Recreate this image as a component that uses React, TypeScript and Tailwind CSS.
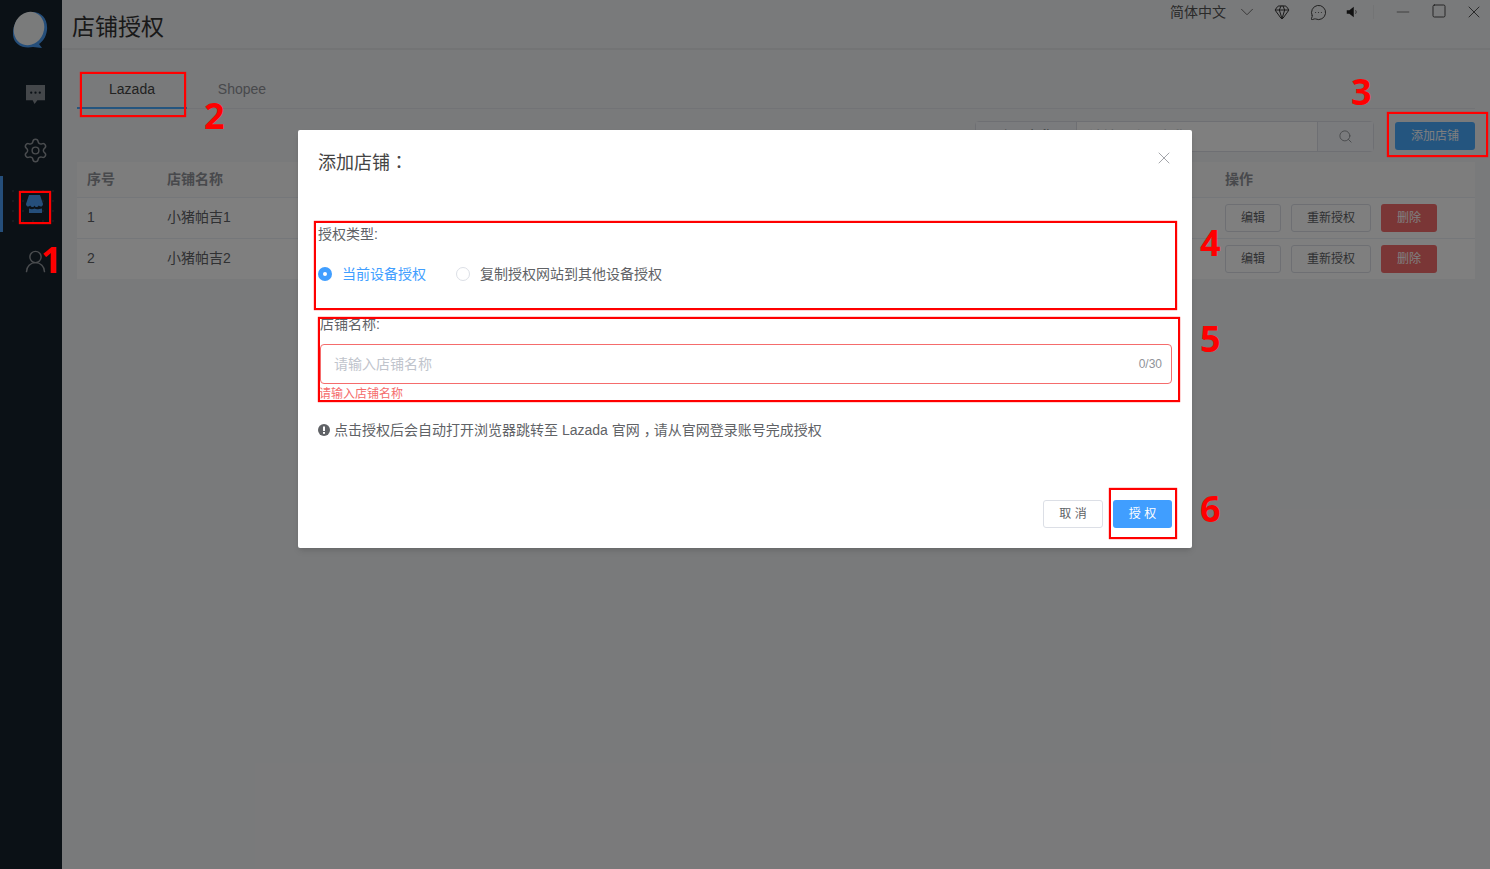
import { ChevronDown, Gem, MessageCircleMore, Minus, Search, Settings, Square, UserRound, X } from "lucide-react";

const font = { fontFamily: '"Liberation Sans", "Noto Sans CJK SC", sans-serif' };
const centredPunct = { fontFamily: '"Noto Sans CJK TC", sans-serif' };

const rows = [
  { id: 1, name: "小猪帕吉1" },
  { id: 2, name: "小猪帕吉2" },
];

const marks = [
  { n: "1", box: "left-[19px] top-[191px] w-[32px] h-[33px]", num: "left-[41px] top-[235px]" },
  { n: "2", box: "left-[80px] top-[72px] w-[106px] h-[45px]", num: "left-[204px] top-[91px]" },
  { n: "3", box: "left-[1387px] top-[112px] w-[101px] h-[45px]", num: "left-[1351px] top-[67px]" },
  { n: "4", box: "left-[314px] top-[221px] w-[863px] h-[89px]", num: "left-[1200px] top-[218px]" },
  { n: "5", box: "left-[318px] top-[317px] w-[862px] h-[85px]", num: "left-[1200px] top-[314px]" },
  { n: "6", box: "left-[1109px] top-[488px] w-[68px] h-[51px]", num: "left-[1200px] top-[484px]" },
];

const Sidebar = () => (
  <aside className="flex w-[62px] shrink-0 flex-col items-center bg-[#16222c]">
    <svg className="mt-[11px] h-[38px] w-[36px]" viewBox="0 0 36 38">
      <path d="M19 1C29 1 35 8 34 19C33 27 29 31 26 33L29 37L20 36C10 38 1 34 0 24C-1 12 8 1 19 1Z" fill="#4a9df5" />
      <ellipse cx="16" cy="17.500" rx="15" ry="17" transform="rotate(22 16 17.500)" fill="#f4f6f7" />
    </svg>
    <div className="mt-[34px] flex h-[24px] w-full items-center justify-center pl-[9px]">
      <svg className="h-[20px] w-[19px]" viewBox="0 0 20 21">
        <path d="M0 0H20V16H12L9 20L7 16H0Z" fill="#888e94" />
        <circle cx="5.500" cy="8" r="1.200" fill="#16222c" />
        <circle cx="10" cy="8" r="1.200" fill="#16222c" />
        <circle cx="14.500" cy="8" r="1.200" fill="#16222c" />
      </svg>
    </div>
    <div className="mt-[30px] flex w-full justify-center pl-[9px]">
      <Settings className="h-[27px] w-[27px] text-[#94999e]" strokeWidth={1.3} />
    </div>
    <div className="relative mt-[12px] flex h-[56px] w-full items-center justify-center">
      <div className="absolute left-0 top-0 h-full w-[3px] bg-[#4a9df5]" />
      <div className="absolute left-[8px] top-[10px] h-[36px] w-[49px] bg-[radial-gradient(#2a3640_1px,transparent_1px)] bg-[size:10px_10px]" />
      <svg className="relative ml-[7px] h-[18px] w-[17px]" viewBox="0 0 17 18">
        <path d="M3 0H14L17 9C17 11.500 14.500 12.500 12.750 10.500C11.500 12.500 9.500 12.500 8.500 10.500C7.500 12.500 5.500 12.500 4.250 10.500C2.500 12.500 0 11.500 0 9Z" fill="#4a9df5" />
        <path d="M3 13.500C5 14.500 7 14.500 8.500 13.500C10 14.500 12 14.500 16 13.500V18H3Z" fill="#4a9df5" />
      </svg>
    </div>
    <div className="mt-[16px] flex w-full justify-center pl-[9px]">
      <UserRound className="h-[27px] w-[27px] text-[#94999e]" strokeWidth={1.3} />
    </div>
  </aside>
);

const Header = () => (
  <header className="flex h-[50px] shrink-0 items-start justify-between border-b-2 border-[#e6e8ea] pl-[10px]">
    <h1 className="mt-[9px] text-[23px] leading-[36px] font-normal text-[#333]">店铺授权</h1>
    <div className="flex h-[24px] items-center text-[#333]">
      <span className="text-[14px] leading-[24px] text-[#555]">简体中文</span>
      <ChevronDown className="ml-[10px] h-[22px] w-[22px] text-[#666]" strokeWidth={1} />
      <Gem className="ml-[16px] h-[16px] w-[16px]" strokeWidth={1.5} />
      <MessageCircleMore className="ml-[20px] h-[17px] w-[17px]" strokeWidth={1.3} />
      <svg className="ml-[18px] h-[14px] w-[14px]" viewBox="-1 -1 16 16">
        <path d="M1 5H4L9 1V13L4 9H1Z" fill="#222" />
        <path d="M11 5C12 6 12 8 11 9" fill="none" stroke="#555" />
      </svg>
      <span className="ml-[14px] h-[14px] w-px bg-[#e6e8ea]" />
      <Minus className="ml-[19px] h-[20px] w-[20px] text-[#777]" strokeWidth={1.1} />
      <Square className="ml-[18px] -mt-[2px] h-[16px] w-[16px] text-[#333]" strokeWidth={1.3} />
      <X className="ml-[17px] mr-[6px] h-[20px] w-[20px] text-[#333]" strokeWidth={1} />
    </div>
  </header>
);

const DataTable = () => (
  <div className="mt-[10px] bg-white text-[14px] text-[#606266]">
    <div className="flex h-[36px] items-center border-b border-[#ebeef5] bg-[#fafafa] pb-px font-bold text-[#909399]">
      <span className="w-[90px] pl-[10px]">序号</span>
      <span className="flex-1">店铺名称</span>
      <span className="w-[250px]">操作</span>
    </div>
    {rows.map((row) => (
      <div key={row.id} className="flex h-[41px] items-center border-b border-[#ebeef5] last:h-[40px] last:border-b-0">
        <span className="-mt-[2px] w-[90px] pl-[10px]">{row.id}</span>
        <span className="-mt-[2px] flex-1">{row.name}</span>
        <div className="flex w-[250px] items-center text-[12px]">
          <button type="button" className="h-[28px] w-[56px] rounded-[3px] border border-[#dcdfe6]">编辑</button>
          <button type="button" className="ml-[10px] h-[28px] w-[80px] rounded-[3px] border border-[#dcdfe6]">重新授权</button>
          <button type="button" className="ml-[10px] h-[28px] w-[56px] rounded-[3px] bg-[#f56c6c] text-white">删除</button>
        </div>
      </div>
    ))}
  </div>
);

const Dialog = () => (
  <div className="absolute left-[298px] top-[130px] flex h-[418px] w-[894px] flex-col rounded-[2px] bg-white px-[20px] shadow-md">
    <div className="mt-[19px] flex h-[24px] items-start justify-between">
      <h2 className="text-[18px] leading-[24px] font-normal text-[#444]">
        添加店铺<span style={centredPunct}>：</span>
      </h2>
      <X className="-mr-[2px] -mt-[1px] h-[20px] w-[20px] text-[#909399]" strokeWidth={1} />
    </div>
    <div className="mt-[51px] text-[14px] leading-[20px] text-[#606266]">授权类型:</div>
    <div className="mt-[20px] flex items-center text-[14px] leading-[20px]">
      <span className="flex h-[14px] w-[14px] items-center justify-center rounded-full bg-[#409eff]">
        <span className="h-[4px] w-[4px] rounded-full bg-white" />
      </span>
      <span className="ml-[10px] text-[#409eff]">当前设备授权</span>
      <span className="ml-[30px] h-[14px] w-[14px] rounded-full border border-[#dcdfe6]" />
      <span className="ml-[10px] text-[#606266]">复制授权网站到其他设备授权</span>
    </div>
    <div className="mt-[30px] pl-[2px] text-[14px] leading-[20px] text-[#606266]">店铺名称:</div>
    <div className="ml-[2px] mt-[10px] flex h-[40px] items-center justify-between rounded-[4px] border border-[#f56c6c] pl-[13px] pr-[9px]">
      <span className="text-[14px] text-[#c0c4cc]">请输入店铺名称</span>
      <span className="text-[12px] text-[#909399]">0/30</span>
    </div>
    <div className="ml-[1px] mt-[1px] text-[12px] leading-[18px] text-[#f56c6c]">请输入店铺名称</div>
    <div className="mt-[17px] flex h-[20px] items-center text-[14px] leading-[20px] text-[#606266]">
      <svg className="mr-[4px] h-[12px] w-[12px]" viewBox="0 0 12 12">
        <circle cx="6" cy="6" r="6" fill="#606266" />
        <rect x="5" y="2.500" width="2" height="4.500" fill="#fff" />
        <rect x="5" y="8" width="2" height="1.800" fill="#fff" />
      </svg>
      <span className="whitespace-pre">
        点击授权后会自动打开浏览器跳转至 Lazada 官<span className="tracking-[4px]">网</span><span className="tracking-[-4px]">，</span>请从官网登录账号完成授权
      </span>
    </div>
    <div className="mt-[60px] flex justify-end text-[12px]">
      <button type="button" className="h-[28px] w-[60px] rounded-[3px] border border-[#dcdfe6] text-[#606266]">取 消</button>
      <button type="button" className="ml-[10px] h-[28px] w-[59px] rounded-[3px] bg-[#409eff] text-white">授 权</button>
    </div>
  </div>
);

export default function App() {
  return (
    <div className="relative flex h-[869px] w-[1490px] overflow-hidden bg-[#f3f4f6]" style={font}>
      <Sidebar />
      <main className="flex flex-1 flex-col">
        <Header />
        <div className="px-[15px]">
          <div className="mt-[20px] flex h-[39px] border-b border-[#e4e7ed] text-[14px]">
            <div className="flex h-[39px] w-[110px] items-center justify-center border-b-2 border-[#48aaff] pt-px text-[#444]">Lazada</div>
            <div className="flex h-[38px] w-[110px] items-center justify-center text-[#909399]">Shopee</div>
          </div>
          <div className="mt-[12px] flex h-[31px] justify-end">
            <div className="flex h-[31px] w-[399px] rounded-[4px] border border-[#dcdfe6] bg-white text-[14px] text-[#606266]">
              <span className="flex w-[101px] items-center justify-center border-r border-[#dcdfe6] bg-[#f5f7fa]">账号名称</span>
              <span className="flex flex-1 items-center pl-[12px] text-[#c0c4cc]">请输入账号名称</span>
              <span className="flex w-[56px] items-center justify-center border-l border-[#dcdfe6] bg-[#f5f7fa]">
                <Search className="h-[15px] w-[15px] text-[#909399]" strokeWidth={1.5} />
              </span>
            </div>
            <button type="button" className="ml-[21px] mt-[1px] h-[28px] w-[80px] rounded-[3px] bg-[#48aaff] text-[12px] text-white">添加店铺</button>
          </div>
          <DataTable />
        </div>
      </main>
      <div className="absolute inset-0 bg-black/50" />
      <Dialog />
      {marks.map((m) => (
        <div key={m.n}>
          <div className={`absolute border-2 border-[#ff0000] shadow-[0_0_1px_#ff0000] ${m.box}`} />
          <span className={`absolute text-[36px] leading-[50px] font-bold text-[#ff0000] ${m.num}`} style={{ fontFamily: '"Noto Sans", sans-serif' }}>{m.n}</span>
        </div>
      ))}
    </div>
  );
}
